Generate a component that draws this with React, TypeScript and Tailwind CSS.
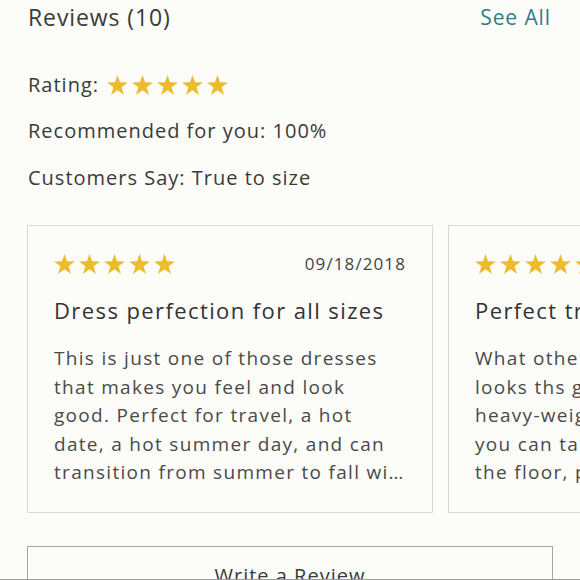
const reviews = [
  {
    rating: 5,
    date: '09/18/2018',
    title: 'Dress perfection for all sizes',
    // lineas fijas; la ultima se corta con puntos suspensivos
    lines: [
      'This is just one of those dresses',
      'that makes you feel and look',
      'good. Perfect for travel, a hot',
      'date, a hot summer day, and can',
      'transition from summer to fall with a cardigan and boots.',
    ],
  },
  {
    rating: 5,
    date: '08/02/2018',
    title: 'Perfect travel dress',
    lines: [
      'What other dress is this easy and',
      'looks ths good? It is not a',
      'heavy-weight fabric and',
      'you can take it anywhere, off',
      'the floor, pack it and go again.',
    ],
  },
];

// estrella solida, puntas rectas como el glifo ★
function StarIcon() {
  return (
    <svg width="21" height="20" viewBox="0 0 24 23" className="shrink-0">
      <polygon
        points="12,0 14.9,8.4 24,8.6 16.7,14 19.4,23 12,17.6 4.6,23 7.3,14 0,8.6 9.1,8.4"
        fill="#edbb2e"
      />
    </svg>
  );
}

function Stars({ count }: { count: number }) {
  return (
    <div className="flex items-center gap-[4px]">
      {Array.from({ length: count }).map((_, i) => (
        <StarIcon key={i} />
      ))}
    </div>
  );
}

export default function App() {
  return (
    <div className="w-[580px] h-[580px] overflow-hidden bg-[#fcfcf9] font-['Open_Sans',sans-serif] text-[#3a3a3a] border-b border-[#9a9a9a]">
      <div className="px-[27px]">
        {/* cabecera */}
        <div className="flex items-center justify-between h-[35px]">
          <h2 className="text-[23px] tracking-[0.9px] pl-[1px]">Reviews (10)</h2>
          <button className="text-[21px] text-[#2f7d89] tracking-[0.9px] pr-[2px]">See All</button>
        </div>

        {/* resumen */}
        <div className="mt-[27px] text-[20px] tracking-[1px] pl-[1px]">
          <div className="flex items-center gap-[8px] h-[46px]">
            <span>Rating:</span>
            <Stars count={5} />
          </div>
          <div className="flex items-center h-[46px]">Recommended for you: 100%</div>
          <div className="flex items-center h-[47px]">Customers Say: True to size</div>
        </div>

        {/* tarjetas */}
        <div className="mt-[24px] flex gap-[15px] w-[620px]">
          {reviews.map((r) => (
            <div
              key={r.title}
              className="shrink-0 w-[406px] h-[288px] border border-[#d8d8d6] pl-[26px] pr-[26px] pt-[26px]"
            >
              <div className="flex items-center justify-between h-[24px]">
                <Stars count={r.rating} />
                <span className="text-[17px] tracking-[1.1px] text-[#444]">{r.date}</span>
              </div>
              <h3 className="mt-[19px] text-[22px] leading-[30px] tracking-[1.4px] text-[#333]">{r.title}</h3>
              <div className="mt-[19px] text-[19px] leading-[28.5px] tracking-[1.3px] text-[#4a4a4a]">
                {r.lines.map((l) => (
                  <div key={l} className="truncate">
                    {l}
                  </div>
                ))}
              </div>
            </div>
          ))}
        </div>

        {/* boton */}
        <button className="mt-[33px] w-[526px] h-[60px] border border-[#a5a5a5] text-[20px] tracking-[1px] text-[#3a3a3a]">
          Write a Review
        </button>
      </div>
    </div>
  );
}
